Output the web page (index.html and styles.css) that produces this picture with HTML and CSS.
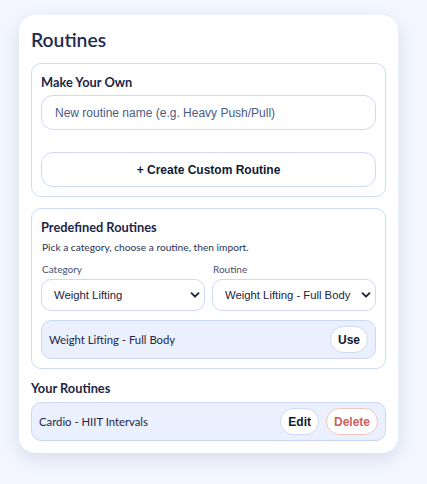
FILE: index.html
```html
<!DOCTYPE html>
<html>
<head>
<meta charset="utf-8">
<link rel="stylesheet" href="styles.css">
</head>
<body>
<div class="card">
  <h1 class="title">Routines</h1>
  <section class="box">
    <h2 class="heading">Make Your Own</h2>
    <input class="field" type="text" placeholder="New routine name (e.g. Heavy Push/Pull)">
    <button class="wide-btn">+ Create Custom Routine</button>
  </section>
  <section class="box">
    <h2 class="heading">Predefined Routines</h2>
    <p class="hint">Pick a category, choose a routine, then import.</p>
    <div class="pickers">
      <label class="picker">
        <span class="label">Category</span>
        <span class="select-wrap">
          <select class="select"><option>Weight Lifting</option></select>
          <svg class="chev" viewBox="0 0 10 10" width="10" height="10"><path d="M1.5 3.2 L5 6.7 L8.5 3.2" fill="none" stroke="#1c2440" stroke-width="1.9" stroke-linecap="round" stroke-linejoin="round"/></svg>
        </span>
      </label>
      <label class="picker">
        <span class="label">Routine</span>
        <span class="select-wrap">
          <select class="select"><option>Weight Lifting - Full Body</option></select>
          <svg class="chev" viewBox="0 0 10 10" width="10" height="10"><path d="M1.5 3.2 L5 6.7 L8.5 3.2" fill="none" stroke="#1c2440" stroke-width="1.9" stroke-linecap="round" stroke-linejoin="round"/></svg>
        </span>
      </label>
    </div>
    <div class="row">
      <span class="row-name">Weight Lifting - Full Body</span>
      <button class="pill">Use</button>
    </div>
  </section>
  <h2 class="heading own">Your Routines</h2>
  <div class="row list-row">
    <span class="row-name">Cardio - HIIT Intervals</span>
    <span class="actions">
      <button class="pill">Edit</button>
      <button class="pill danger">Delete</button>
    </span>
  </div>
</div>
</body>
</html>
```

FILE: styles.css
```css
html, body {
  margin: 0;
  padding: 0;
}
body {
  background: #f3f6fe;
  font-family: Lato, "Open Sans", sans-serif;
  color: #1e2747;
  padding: 15px 0 0 19px;
  min-height: 484px;
  box-sizing: border-box;
}
.card {
  width: 379px;
  box-sizing: border-box;
  background: #ffffff;
  border-radius: 16px;
  padding: 13px 12px 12px;
  box-shadow: 0 6px 18px rgba(60, 80, 140, 0.14);
}
.title {
  margin: 0 0 11px 0;
  font-size: 19.3px;
  line-height: 24px;
  font-weight: 600;
  color: #1f2a4f;
}
.box {
  border: 1px solid #cfdbf5;
  border-radius: 10px;
  padding: 10px 9px 9px;
  margin-bottom: 11px;
  display: flex;
  flex-direction: column;
}
.heading {
  margin: 0;
  font-size: 12.8px;
  line-height: 16px;
  font-weight: 700;
  color: #1c2747;
}
.field {
  margin-top: 5px;
  height: 35px;
  box-sizing: border-box;
  border: 1px solid #cdd9f5;
  border-radius: 12px;
  padding: 0 13px;
  font-family: "Liberation Sans", Arial, sans-serif;
  font-size: 12px;
  color: #1e2747;
  outline: none;
}
.field::placeholder {
  color: #4b5b86;
}
.wide-btn {
  margin-top: 22px;
  height: 35px;
  border: 1px solid #cdd9f5;
  border-radius: 12px;
  background: #ffffff;
  font-family: "Liberation Sans", Arial, sans-serif;
  font-size: 12px;
  font-weight: 700;
  color: #111a33;
}
.hint {
  margin: 6px 0 0 1px;
  font-size: 10.2px;
  line-height: 13px;
  color: #2a3352;
}
.pickers {
  display: grid;
  grid-template-columns: 1fr 1fr;
  gap: 7px;
  margin-top: 9px;
}
.picker {
  display: flex;
  flex-direction: column;
}
.label {
  font-size: 10px;
  line-height: 12px;
  color: #4a5270;
  margin: 0 0 4px 1px;
}
.select-wrap {
  position: relative;
  display: block;
}
.select {
  width: 100%;
  height: 32px;
  box-sizing: border-box;
  appearance: none;
  -webkit-appearance: none;
  border: 1px solid #cdd9f5;
  border-radius: 10px;
  background: #ffffff;
  padding: 0 16px 0 12px;
  font-family: "Liberation Sans", Arial, sans-serif;
  font-size: 11.3px;
  color: #1c2440;
  outline: none;
}
.chev {
  position: absolute;
  right: 5px;
  top: 11px;
  pointer-events: none;
}
.row {
  margin-top: 9px;
  height: 39px;
  box-sizing: border-box;
  display: flex;
  align-items: center;
  justify-content: space-between;
  background: #eaf0fd;
  border: 1px solid #cbd8f5;
  border-radius: 10px;
  padding: 0 7px;
}
.row-name {
  font-size: 11.3px;
  color: #1e2747;
}
.pill {
  height: 27px;
  box-sizing: border-box;
  border: 1px solid #cdd9f5;
  border-radius: 14px;
  background: #ffffff;
  padding: 0 7px;
  font-family: "Liberation Sans", Arial, sans-serif;
  font-size: 12px;
  font-weight: 700;
  color: #111a33;
}
.own {
  margin-top: 10px;
}
.list-row {
  margin-top: 6px;
}
.actions {
  display: flex;
  gap: 7px;
}
.danger {
  color: #c9625c;
  border-color: #f0c4c2;
}
```
